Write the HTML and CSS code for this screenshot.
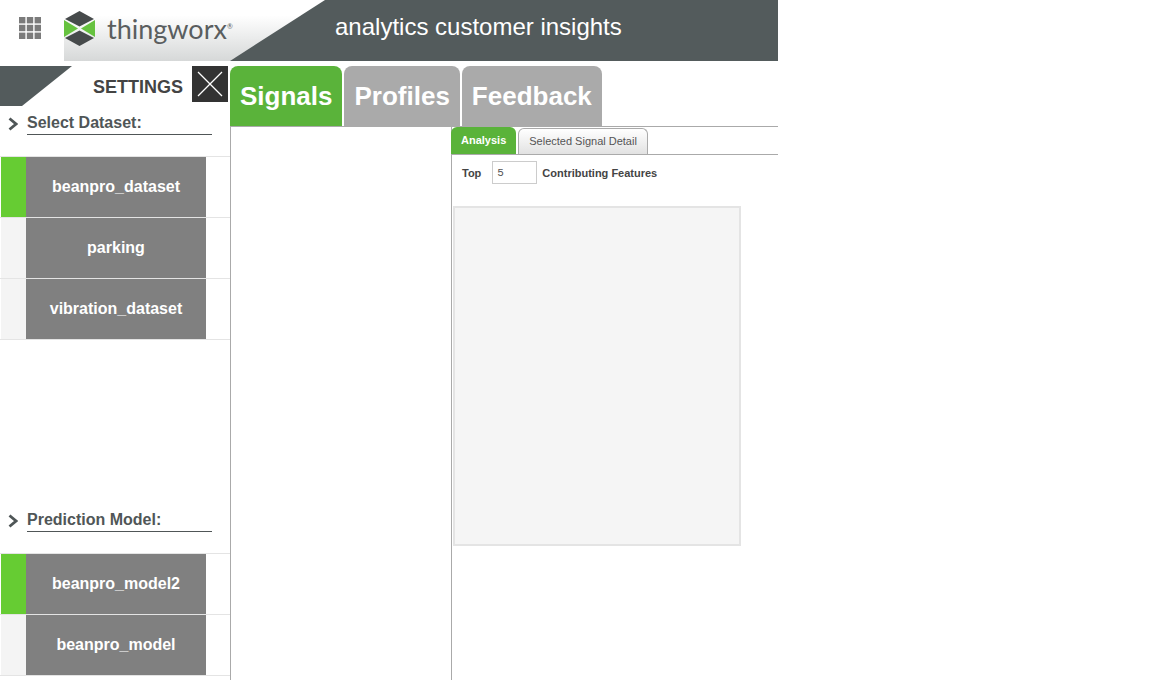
FILE: index.html
```html
<!DOCTYPE html>
<html lang="en">
<head>
  <meta charset="UTF-8">
  <meta name="viewport" content="width=device-width, initial-scale=1.0">
  <title>Analytics Customer Insights</title>
  <link rel="stylesheet" href="styles.css">
</head>
<body>
  <div class="app">
    <!-- Top header -->
    <div class="header">
      <div class="launcher">
        <svg width="22" height="22" viewBox="0 0 22 22" fill="#7b7b7b">
          <rect x="0" y="0" width="6.4" height="6.4"/><rect x="7.8" y="0" width="6.4" height="6.4"/><rect x="15.6" y="0" width="6.4" height="6.4"/>
          <rect x="0" y="7.8" width="6.4" height="6.4"/><rect x="7.8" y="7.8" width="6.4" height="6.4"/><rect x="15.6" y="7.8" width="6.4" height="6.4"/>
          <rect x="0" y="15.6" width="6.4" height="6.4"/><rect x="7.8" y="15.6" width="6.4" height="6.4"/><rect x="15.6" y="15.6" width="6.4" height="6.4"/>
        </svg>
      </div>
      <div class="brand">
        <div class="logo">
          <svg width="31" height="35" viewBox="0 0 31 35">
            <polygon points="15.5,0 30,8 15.5,15.5 1,8" fill="#464a4b"/>
            <polygon points="15.5,35 30,27 15.5,19.5 1,27" fill="#464a4b"/>
            <polygon points="0,9 14,17.5 0,26" fill="#66c23f"/>
            <polygon points="31,9 17,17.5 31,26" fill="#66c23f"/>
          </svg>
          <span class="logo-name">thingworx<sup>®</sup></span>
        </div>
        <div class="app-title">analytics customer insights</div>
      </div>
    </div>

    <div class="content">
      <!-- Settings sidebar -->
      <div class="sidebar">
        <div class="settings-bar">
          <div class="settings-label">SETTINGS</div>
          <div class="close-box">
            <svg width="36" height="36" viewBox="0 0 36 36" stroke="#fff" stroke-width="1.2">
              <line x1="6" y1="6" x2="30" y2="30"/><line x1="30" y1="6" x2="6" y2="30"/>
            </svg>
          </div>
        </div>

        <div class="section dataset-section">
          <div class="section-head">
            <svg class="chevron" width="10" height="14" viewBox="0 0 10 14" fill="none" stroke="#4f5657" stroke-width="2.8">
              <polyline points="1.5,1.5 8,7 1.5,12.5"/>
            </svg>
            <div class="section-title">Select Dataset:</div>
          </div>
          <div class="pick-list">
            <div class="pick-row selected"><span class="pick-flag"></span><span class="pick-name">beanpro_dataset</span></div>
            <div class="pick-row"><span class="pick-flag"></span><span class="pick-name">parking</span></div>
            <div class="pick-row"><span class="pick-flag"></span><span class="pick-name">vibration_dataset</span></div>
          </div>
        </div>

        <div class="section">
          <div class="section-head">
            <svg class="chevron" width="10" height="14" viewBox="0 0 10 14" fill="none" stroke="#4f5657" stroke-width="2.8">
              <polyline points="1.5,1.5 8,7 1.5,12.5"/>
            </svg>
            <div class="section-title">Prediction Model:</div>
          </div>
          <div class="pick-list">
            <div class="pick-row selected"><span class="pick-flag"></span><span class="pick-name">beanpro_model2</span></div>
            <div class="pick-row"><span class="pick-flag"></span><span class="pick-name">beanpro_model</span></div>
          </div>
        </div>
      </div>

      <!-- Main area -->
      <div class="main">
        <div class="main-tabs">
          <div class="main-tab active">Signals</div>
          <div class="main-tab">Profiles</div>
          <div class="main-tab">Feedback</div>
        </div>
        <div class="main-body">
          <div class="signal-list"></div>
          <div class="detail">
            <div class="sub-tabs">
              <div class="sub-tab active">Analysis</div>
              <div class="sub-tab">Selected Signal Detail</div>
            </div>
            <div class="top-row">
              <span>Top</span>
              <input class="top-input" type="text" value="5">
              <span>Contributing Features</span>
            </div>
            <div class="chart-box"></div>
          </div>
        </div>
      </div>
    </div>
  </div>
</body>
</html>
```

FILE: styles.css
```css
html, body {
  margin: 0;
  padding: 0;
  height: 680px;
  overflow: hidden;
  background-color: #fff;
  font-family: "Liberation Sans", Arial, sans-serif;
}
.app {
  width: 778px;
}

/* header */
.header {
  display: flex;
  height: 61px;
}
.launcher {
  width: 64px;
  padding: 17px 0 0 19px;
  box-sizing: border-box;
}
.brand {
  position: relative;
  flex: 1;
  display: flex;
  background: linear-gradient(#fff 25%, #d6d8d8 100%);
}
.brand::before {
  content: "";
  position: absolute;
  top: 0;
  left: 0;
  right: 0;
  bottom: 0;
  background-color: #535b5c;
  clip-path: polygon(261px 0, 100% 0, 100% 100%, 166px 100%);
}
.logo {
  position: relative;
  width: 271px;
  display: flex;
  align-items: center;
  height: 61px;
}
.logo svg {
  margin: 0 12px 4px 0;
}
.logo-name {
  font-family: Lato, sans-serif;
  font-weight: 400;
  font-size: 27px;
  color: #5a5e5f;
  margin-bottom: 4px;
}
.logo-name sup {
  font-size: 7px;
  vertical-align: 10px;
  line-height: 0;
}
.app-title {
  position: relative;
  color: #fff;
  font-size: 24px;
  line-height: 54px;
}

.content {
  display: flex;
  margin-top: 5px;
}

/* sidebar */
.sidebar {
  width: 230px;
  flex: none;
  height: 614px;
  overflow: hidden;
}
.settings-bar {
  position: relative;
  display: flex;
  justify-content: flex-end;
  height: 40px;
  padding-right: 2px;
}
.settings-bar::before {
  content: "";
  position: absolute;
  top: 0;
  left: 0;
  width: 72px;
  height: 40px;
  background-color: #535b5c;
  clip-path: polygon(0 0, 100% 0, 22px 100%, 0 100%);
}
.settings-label {
  font-size: 18px;
  font-weight: bold;
  color: #444;
  line-height: 42px;
  margin-right: 9px;
}
.close-box {
  width: 36px;
  height: 36px;
  background-color: #333;
}
.close-box svg {
  display: block;
}
.dataset-section {
  height: 397px;
}
.section-head {
  display: flex;
  align-items: flex-end;
  height: 29px;
  padding: 0 18px 0 8px;
}
.chevron {
  flex: none;
  margin: 0 9px 4px 0;
}
.section-title {
  flex: 1;
  font-size: 16px;
  font-weight: bold;
  color: #505657;
  line-height: 20px;
  padding-bottom: 1px;
  border-bottom: 1px solid #505657;
}
.pick-list {
  margin-top: 21px;
  border-top: 1px solid #e4e4e4;
}
.pick-row {
  display: flex;
  height: 60px;
  border-bottom: 1px solid #e4e4e4;
  padding-left: 1px;
}
.pick-flag {
  width: 25px;
  background-color: #f4f4f4;
}
.pick-row.selected .pick-flag {
  background-color: #66cc33;
}
.pick-name {
  width: 180px;
  background-color: #808080;
  color: #fff;
  font-size: 16px;
  font-weight: bold;
  text-align: center;
  line-height: 60px;
}

/* main */
.main {
  flex: 1;
}
.main-tabs {
  display: flex;
  gap: 2px;
  height: 60px;
  border-bottom: 1px solid #aaa;
}
.main-tab {
  padding: 0 10px;
  background-color: #aaa;
  border-radius: 8px 8px 0 0;
  color: #fff;
  font-size: 26px;
  font-weight: bold;
  line-height: 60px;
}
.main-tab.active {
  background-color: #5ab33a;
}
.main-body {
  display: flex;
  height: 553px;
  border-left: 1px solid #aaa;
}
.signal-list {
  width: 220px;
  flex: none;
}
.detail {
  flex: 1;
  border-left: 1px solid #aaa;
}
.sub-tabs {
  display: flex;
  align-items: flex-end;
  gap: 2px;
  height: 27px;
  border-bottom: 1px solid #aaa;
}
.sub-tab {
  height: 26px;
  box-sizing: border-box;
  padding: 0 10px;
  font-size: 11px;
  line-height: 24px;
  color: #555;
  border: 1px solid #aaa;
  border-bottom: none;
  border-radius: 6px 6px 0 0;
  background: linear-gradient(#fff, #e2e2e2);
}
.sub-tab.active {
  height: 27px;
  margin-left: -1px;
  background: #5ab33a;
  border: none;
  color: #fff;
  font-weight: bold;
  line-height: 26px;
}
.top-row {
  display: flex;
  align-items: center;
  height: 23px;
  margin-top: 6px;
  padding-left: 10px;
  font-size: 11px;
  font-weight: bold;
  color: #444;
}
.top-input {
  width: 45px;
  height: 23px;
  box-sizing: border-box;
  margin: 0 5px 0 11px;
  padding: 0 4px;
  border: 1px solid #ccc;
  font-family: "Liberation Mono", monospace;
  font-size: 11px;
  color: #555;
}
.chart-box {
  width: 288px;
  height: 340px;
  box-sizing: border-box;
  margin: 22px 0 0 1px;
  background-color: #f5f5f5;
  border: 2px solid #e4e4e4;
}
```
